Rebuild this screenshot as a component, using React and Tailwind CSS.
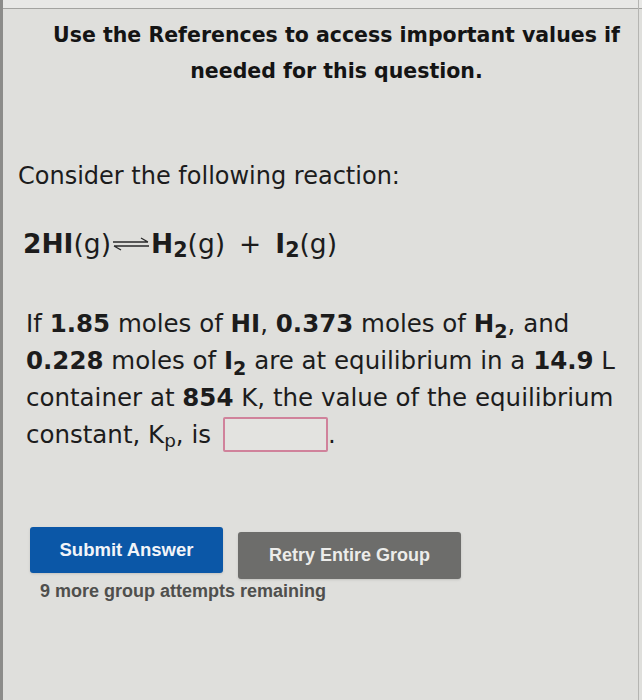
import React from 'react';

const EqArrow = () => (
  <svg className="w-[38px] h-[14px] mx-[1px]" viewBox="0 0 38 14" fill="none" stroke="#2a2a2a" strokeWidth="1.4">
    {/* forward harpoon */}
    <path d="M1 5h35M36 5l-7-4" />
    {/* reverse harpoon */}
    <path d="M37 9H2M2 9l7 4" />
  </svg>
);

const B = ({ children }) => <span className="font-bold">{children}</span>;
const Sub = ({ children }) => (
  <span className="font-bold text-[0.78em] relative top-[0.3em] leading-none">{children}</span>
);

export default function App() {
  return (
    <div className="relative w-full h-[700px] overflow-hidden bg-[#dfdfdc] text-[#1c1c1c] border-l-[3px] border-[#8c8c8a] font-['DejaVu_Sans',sans-serif]">
      {/* top bezel strip */}
      <div className="h-[9px] bg-[#e8e8e6] border-b border-[#a3a3a0]" />
      <div className="absolute top-0 right-[3px] w-[1px] h-full bg-[#b5b5b2]" />

      {/* reference notice */}
      <div className="pt-[8px] pl-[28px] text-center font-bold text-[20.5px] leading-[36px] text-[#141414]">
        Use the References to access important values if
        <br />
        needed for this question.
      </div>

      <div className="pl-[15px] mt-[72px] text-[24px] leading-[30px]">
        Consider the following reaction:
      </div>

      <div className="pl-[20px] mt-[38px] flex items-center text-[26.5px] leading-[30px]">
        <B>2HI</B>(g)
        <EqArrow />
        <B>H</B>
        <Sub>2</Sub>(g)
        <span className="mx-[14px]">+</span>
        <B>I</B>
        <Sub>2</Sub>(g)
      </div>

      <div className="pl-[23px] mt-[46px] text-[24.5px] leading-[37px]">
        If <B>1.85</B> moles of <B>HI</B>, <B>0.373</B> moles of <B>H</B>
        <Sub>2</Sub>, and
        <br />
        <B>0.228</B> moles of <B>I</B>
        <Sub>2</Sub> are at equilibrium in a <B>14.9</B> L
        <br />
        container at <B>854</B> K, the value of the equilibrium
        <br />
        <span className="inline-flex items-center">
          constant, K<span className="text-[0.75em] relative top-[0.35em]">p</span>, is
          <span className="inline-block ml-[12px] w-[105px] h-[35px] border-2 border-[#d0829b] rounded-[2px] bg-[#e3e3e0]" />
          .
        </span>
      </div>

      {/* actions */}
      <div className="pl-[27px] mt-[74px] flex items-start gap-[15px] font-['Liberation_Sans',sans-serif] font-bold">
        <button className="w-[193px] h-[46px] rounded-[3px] bg-[#0b57a7] text-[#f2f4f8] text-[18.5px] shadow-sm">
          Submit Answer
        </button>
        <button className="mt-[5px] w-[223px] h-[47px] rounded-[3px] bg-[#6d6d6b] text-[#ececea] text-[18px] shadow-sm">
          Retry Entire Group
        </button>
      </div>
      <div className="pl-[37px] -mt-[1px] font-['Liberation_Sans',sans-serif] font-bold text-[18px] text-[#4f4f4d]">
        9 more group attempts remaining
      </div>
    </div>
  );
}
